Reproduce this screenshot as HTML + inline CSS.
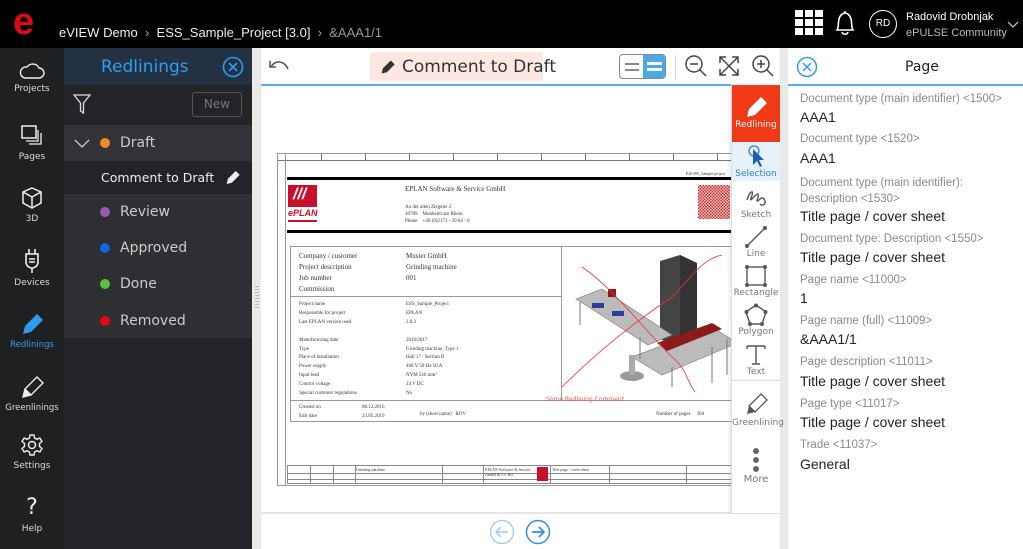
<!DOCTYPE html>
<html><head><meta charset="utf-8">
<style>
*{box-sizing:border-box;margin:0;padding:0}
body{width:1023px;height:549px;overflow:hidden;position:relative;font-family:"Liberation Sans","DejaVu Sans",sans-serif;background:#e9e9e9}
.a{position:absolute}
.top{left:0;top:0;width:1023px;height:48px;background:#000;color:#fff}
.rail{left:0;top:48px;width:64px;height:501px;background:#1f2022}
.ri{position:absolute;left:0;width:64px;text-align:center;color:#ddd;font-size:9px;font-family:"DejaVu Sans",sans-serif}
.ri svg{display:block;margin:0 auto 4px}
.panel{left:64px;top:48px;width:188px;height:501px;background:#232427}
.st{position:absolute;left:0;width:188px;height:37px;color:#ccc;font-size:14px;font-family:"DejaVu Sans",sans-serif;line-height:37px}
.dot{display:inline-block;width:10px;height:10px;border-radius:50%;vertical-align:-1px;margin:0 10px 0 36px}
.lbl{position:absolute;left:800px;font-size:11.5px;color:#8a8a8a;font-family:"Liberation Sans",sans-serif;white-space:nowrap}
.val{position:absolute;left:800px;font-size:14px;color:#222;font-family:"Liberation Sans",sans-serif;white-space:nowrap}
.tl{position:absolute;left:732px;width:48px;text-align:center;font-size:9px;color:#777;font-family:"DejaVu Sans",sans-serif}
.tl svg{display:block;margin:0 auto}
.d{position:absolute;font-family:"Liberation Serif",serif;color:#333;white-space:nowrap}
</style></head><body>
<div class="a top">
  <div class="a" style="left:13px;top:2px;font-size:38px;line-height:40px;font-weight:bold;color:#e30613;font-family:'Liberation Sans',sans-serif">e</div>
  <div class="a" style="left:59px;top:25px;font-size:13px;color:#eee">eVIEW Demo &nbsp;<span style="color:#aaa">›</span>&nbsp; ESS_Sample_Project [3.0] &nbsp;<span style="color:#aaa">›</span>&nbsp; <span style="color:#999">&amp;AAA1/1</span></div>
  <svg class="a" style="left:795px;top:10px" width="28" height="26" viewBox="0 0 28 26"><g fill="#fff"><rect x="0" y="0" width="8" height="7"/><rect x="10" y="0" width="8" height="7"/><rect x="20" y="0" width="8" height="7"/><rect x="0" y="9" width="8" height="7"/><rect x="10" y="9" width="8" height="7"/><rect x="20" y="9" width="8" height="7"/><rect x="0" y="18" width="8" height="7"/><rect x="10" y="18" width="8" height="7"/><rect x="20" y="18" width="8" height="7"/></g></svg>
  <svg class="a" style="left:833px;top:10px" width="24" height="26" viewBox="0 0 24 26"><path d="M4 20 C6 17 5 12 6 9 C7 5 10 3 12 3 C14 3 17 5 18 9 C19 12 18 17 20 20 Z M9 22 C10 25 14 25 15 22" fill="none" stroke="#fff" stroke-width="1.6"/><line x1="12" y1="1" x2="12" y2="3" stroke="#fff" stroke-width="1.6"/></svg>
  <div class="a" style="left:869px;top:10px;width:28px;height:28px;border:1.5px solid #fff;border-radius:50%;font-size:10px;text-align:center;line-height:25px">RD</div>
  <div class="a" style="left:906px;top:11px;font-size:11px">Radovid Drobnjak</div>
  <div class="a" style="left:906px;top:27px;font-size:11px;color:#bbb">ePULSE Community</div>
  <svg class="a" style="left:1007px;top:21px" width="12" height="8"><path d="M1 1 L6 6 L11 1" fill="none" stroke="#ccc" stroke-width="1.2"/></svg>
</div>
<div class="a rail">
  <div class="ri" style="top:14px"><svg width="26" height="18" viewBox="0 0 26 18"><path d="M6 16 H20 A5 5 0 0 0 20 6 A7 7 0 0 0 8 5 A5.5 5.5 0 0 0 6 16 Z" fill="none" stroke="#eee" stroke-width="1.4"/></svg>Projects</div>
  <div class="ri" style="top:76px"><svg width="24" height="24" viewBox="0 0 24 24"><rect x="2" y="2" width="14" height="12" fill="none" stroke="#eee" stroke-width="1.5"/><path d="M18 6 V17 H6 M21 9 V20 H9" fill="none" stroke="#eee" stroke-width="1.3"/></svg>Pages</div>
  <div class="ri" style="top:138px"><svg width="24" height="24" viewBox="0 0 24 24"><path d="M12 2 L21 6 V17 L12 22 L3 17 V6 Z M3 6 L12 11 L21 6 M12 11 V22" fill="none" stroke="#eee" stroke-width="1.5"/></svg>3D</div>
  <div class="ri" style="top:200px"><svg width="24" height="26" viewBox="0 0 24 26"><path d="M9 1 V6 M15 1 V6 M6 6 H18 V14 A6 6 0 0 1 6 14 Z M12 20 V25 M9 11 H15 M9 14 H15" fill="none" stroke="#eee" stroke-width="1.6"/></svg>Devices</div>
  <div class="ri" style="top:264px;color:#2e9cf0;font-size:8.5px"><svg width="26" height="24" viewBox="0 0 26 24"><path d="M18 2 L24 8 L12 20 L6 14 Z" fill="#2e9cf0"/><path d="M6 14 L12 20 L4 22 Z" fill="#2e9cf0"/></svg>Redlinings</div>
  <div class="ri" style="top:327px;font-size:8.5px"><svg width="26" height="24" viewBox="0 0 26 24"><path d="M18 2 L24 8 L12 20 L6 14 Z M6 14 L4 22 L12 20" fill="none" stroke="#eee" stroke-width="1.4"/><path d="M6 14 L12 20 L4 22 Z" fill="#eee"/></svg>Greenlinings</div>
  <div class="ri" style="top:385px"><svg width="24" height="24" viewBox="0 0 24 24"><circle cx="12" cy="12" r="3.5" fill="none" stroke="#eee" stroke-width="1.5"/><path d="M10 2 H14 L14.6 5 L17 6.3 L19.8 5 L22 8.5 L19.5 10.5 V13.5 L22 15.5 L19.8 19 L17 17.7 L14.6 19 L14 22 H10 L9.4 19 L7 17.7 L4.2 19 L2 15.5 L4.5 13.5 V10.5 L2 8.5 L4.2 5 L7 6.3 L9.4 5 Z" fill="none" stroke="#eee" stroke-width="1.4"/></svg>Settings</div>
  <div class="ri" style="top:448px"><div style="font-size:22px;color:#eee;line-height:24px;margin-bottom:4px">?</div>Help</div>
</div>
<div class="a panel">
  <div class="a" style="left:0;top:0;width:188px;height:37px;background:#233142"></div>
  <div class="a" style="left:37px;top:9px;font-size:17px;color:#2e9cf0;font-family:'DejaVu Sans',sans-serif">Redlinings</div>
  <svg class="a" style="left:158px;top:8px" width="22" height="22" viewBox="0 0 22 22"><circle cx="11" cy="11" r="9.5" fill="none" stroke="#2e9cf0" stroke-width="1.6"/><path d="M7 7 L15 15 M15 7 L7 15" stroke="#2e9cf0" stroke-width="1.6"/></svg>
  <svg class="a" style="left:9px;top:46px" width="18" height="20" viewBox="0 0 18 20"><path d="M1 1 H17 L10.5 9 V19 L7.5 17 V9 Z" fill="none" stroke="#ddd" stroke-width="1.3"/></svg>
  <div class="a" style="left:128px;top:44px;width:50px;height:25px;border:1px solid #555;border-radius:3px;color:#777;font-size:12px;text-align:center;line-height:23px;font-family:'DejaVu Sans',sans-serif">New</div>
  <div class="st" style="top:77px;background:#323337"><svg style="position:absolute;left:10px;top:14px" width="16" height="10"><path d="M1 1 L8 8 L15 1" fill="none" stroke="#ccc" stroke-width="1.3"/></svg><span class="dot" style="background:#f08a24"></span>Draft</div>
  <div class="st" style="top:113px;height:33px;line-height:33px;background:#232427;color:#eee;font-size:12.5px;padding-left:37px">Comment to Draft<svg style="position:absolute;left:160px;top:8px" width="17" height="17" viewBox="0 0 26 24"><path d="M18 2 L24 8 L12 20 L6 14 Z M6 14 L12 20 L4 22 Z" fill="#eee"/></svg></div>
  <div class="a" style="left:0;top:146px;width:188px;height:144px;background:#2e2f32"></div>
  <div class="st" style="top:146px"><span class="dot" style="background:#9b59b6"></span>Review</div>
  <div class="st" style="top:182px"><span class="dot" style="background:#1565e0"></span>Approved</div>
  <div class="st" style="top:218px"><span class="dot" style="background:#5cbf45"></span>Done</div>
  <div class="st" style="top:255px"><span class="dot" style="background:#e30613"></span>Removed</div>
</div>
<div class="a" style="left:261px;top:48px;width:519px;height:501px;background:#fff"></div>
<div class="a" style="left:261px;top:84px;width:470px;height:1.5px;background:#5aaee8"></div>
<svg class="a" style="left:267px;top:57px" width="24" height="18" viewBox="0 0 24 18"><path d="M4 10 C8 3 17 3 21 12 M3 4 V10 H9" fill="none" stroke="#555" stroke-width="1.6"/></svg>
<div class="a" style="left:370px;top:52px;width:173px;height:29px;background:#fde7e2;border-radius:3px"></div>
<svg class="a" style="left:379px;top:59px" width="17" height="16" viewBox="0 0 26 24"><path d="M18 2 L24 8 L12 20 L6 14 Z M6 14 L12 20 L4 22 Z" fill="#333"/></svg>
<div class="a" style="left:402px;top:57px;font-size:17px;color:#333;font-family:'DejaVu Sans',sans-serif">Comment to Draft</div>
<div class="a" style="left:619px;top:54px;width:47px;height:25px;border:1px solid #888;border-radius:4px;overflow:hidden"><div class="a" style="left:23px;top:0;width:24px;height:25px;background:#4aa8e8"></div><div class="a" style="left:5px;top:8px;width:14px;height:1.5px;background:#888"></div><div class="a" style="left:5px;top:14px;width:14px;height:1.5px;background:#888"></div><div class="a" style="left:27px;top:7px;width:15px;height:3px;background:#fff"></div><div class="a" style="left:27px;top:13px;width:15px;height:3px;background:#fff"></div></div>
<div class="a" style="left:675px;top:55px;width:1px;height:25px;background:#ddd"></div>
<svg class="a" style="left:684px;top:54px" width="24" height="24" viewBox="0 0 24 24"><circle cx="10" cy="10" r="8" fill="none" stroke="#444" stroke-width="1.5"/><path d="M6 10 H14 M16 16 L22 22" stroke="#444" stroke-width="1.5"/></svg>
<svg class="a" style="left:718px;top:55px" width="22" height="22" viewBox="0 0 22 22"><path d="M2 2 L20 20 M20 2 L2 20 M2 8 V2 H8 M14 2 H20 V8 M20 14 V20 H14 M8 20 H2 V14" fill="none" stroke="#444" stroke-width="1.5"/></svg>
<svg class="a" style="left:751px;top:54px" width="24" height="24" viewBox="0 0 24 24"><circle cx="10" cy="10" r="8" fill="none" stroke="#444" stroke-width="1.5"/><path d="M6 10 H14 M10 6 V14 M16 16 L22 22" stroke="#444" stroke-width="1.5"/></svg>
<div class="a" style="left:255px;top:286px;width:4px;height:24px;background:repeating-linear-gradient(#bbb 0 1px,transparent 1px 3px)"></div>
<div class="a" style="left:277px;top:153px;width:455px;height:333px;border:1px solid #999;background:#fff;overflow:hidden">
  <div class="a" style="left:0;top:0;width:455px;height:7px;border-bottom:1px solid #777;background:repeating-linear-gradient(90deg,transparent 0 43px,#777 43px 44px)"></div>
  <div class="a" style="left:0;top:0;width:8px;height:333px;border-right:1px solid #999"></div>
  <div class="d" style="left:408px;top:17px;font-size:4px">P26 000_Sample project</div>
  <div class="a" style="left:9px;top:23px;width:446px;height:3px;background:#000"></div>
  <div class="a" style="left:9px;top:76px;width:446px;height:3px;background:#000"></div>
  <div class="a" style="left:10px;top:31px;width:29px;height:22px;background:#c8102e"></div>
  <div class="d" style="left:15px;top:32px;font-size:16px;color:#fff;font-weight:bold;font-style:italic;font-family:'Liberation Sans',sans-serif">///</div>
  <div class="d" style="left:10px;top:54px;font-size:9px;color:#c8102e;font-weight:bold;font-style:italic;font-family:'Liberation Sans',sans-serif">ePLAN</div>
  <div class="a" style="left:10px;top:66px;width:29px;height:2px;background:#c8102e"></div>
  <div class="d" style="left:127px;top:31px;font-size:7px">EPLAN Software &amp; Service GmbH</div>
  <div class="d" style="left:127px;top:50px;font-size:5px;line-height:7px">An der alten Ziegelei 2<br>40789 &nbsp;&nbsp; Monheim am Rhein<br>Phone &nbsp;&nbsp; +49 (0)2173 - 39 64 - 0</div>
  <div class="a" style="left:420px;top:31px;width:32px;height:34px;background:repeating-conic-gradient(#c33 0 25%,#f6c6c6 0 50%) 0 0/3px 3px"></div>
  <div class="a" style="left:12px;top:92px;width:443px;height:176px;border:1px solid #999"></div>
  <div class="a" style="left:283px;top:92px;width:1px;height:155px;background:#999"></div>
  <div class="a" style="left:12px;top:142px;width:271px;height:1px;background:#999"></div>
  <div class="a" style="left:12px;top:246px;width:443px;height:1px;background:#999"></div>
  <div class="d" style="left:21px;top:97px;font-size:7px;line-height:11px">Company / customer<br>Project description<br>Job number<br>Commission</div>
  <div class="d" style="left:128px;top:97px;font-size:7px;line-height:11px">Muster GmbH<br>Grinding machine<br>001</div>
  <div class="d" style="left:21px;top:147px;font-size:5px;line-height:8.9px">Project name<br>Responsible for project<br>Last EPLAN version used<br><br>Manufacturing date<br>Type<br>Place of installation<br>Power supply<br>Input lead<br>Control voltage<br>Special customer regulations</div>
  <div class="d" style="left:128px;top:147px;font-size:5px;line-height:8.9px">ESS_Sample_Project<br>EPLAN<br>2.8.3<br><br>2016/2017<br>Grinding machine, Type 1<br>Hall 17 / Section B<br>400 V 50 Hz 50 A<br>NYM 5x6 mm²<br>24 V DC<br>No</div>
  <div class="d" style="left:21px;top:250px;font-size:5px;line-height:8.5px">Created on<br>Edit date</div>
  <div class="d" style="left:84px;top:250px;font-size:5px;line-height:8.5px">08.12.2016<br>23.05.2019</div>
  <div class="d" style="left:142px;top:258px;font-size:5px">by (short name) &nbsp; ROV</div>
  <div class="d" style="left:378px;top:258px;font-size:5px">Number of pages &nbsp;&nbsp;&nbsp; 304</div>
  <svg class="a" style="left:284px;top:93px" width="171" height="153" viewBox="0 0 171 153">
    <path d="M98 14 L118 8 L135 16 L135 92 L118 100 L98 92 Z" fill="#444"/><path d="M118 8 L135 16 L135 92 L118 100 Z" fill="#333"/>
    <path d="M14 52 L40 42 L110 88 L86 98 Z" fill="#bbb" stroke="#777" stroke-width=".6"/>
    <path d="M70 110 L150 80 L175 96 L100 128 Z" fill="#bbb" stroke="#777" stroke-width=".6"/>
    <path d="M95 96 L150 76 L160 82 L105 104 Z" fill="#8b1a1a"/>
    <rect x="30" y="56" width="12" height="5" fill="#2a3f9a"/><rect x="50" y="64" width="12" height="5" fill="#2a3f9a"/>
    <rect x="46" y="42" width="8" height="8" fill="#8b1a1a"/>
    <ellipse cx="70" cy="129" rx="12" ry="5" fill="#999"/><rect x="67" y="108" width="6" height="20" fill="#aaa"/>
    <g stroke="#777" stroke-width="1"><path d="M18 55 V78 M78 90 V112 M150 100 V136 M165 92 V128 M110 120 V140"/></g>
    <path d="M20 20 C50 40 80 80 110 110 C125 122 125 135 133 145" fill="none" stroke="#e33" stroke-width=".8"/>
    <path d="M0 140 C40 100 80 70 110 50 C130 30 140 12 160 8" fill="none" stroke="#e33" stroke-width=".8"/>
  </svg>
  <div class="d" style="left:268px;top:242px;font-size:6px;color:#e55;font-family:'DejaVu Sans',sans-serif">Some Redlining Comment</div>
  <div class="a" style="left:9px;top:311px;width:446px;height:19px;border:1px solid #888;background:linear-gradient(#888,#888) 0 7px/100% 1px no-repeat,linear-gradient(#888,#888) 0 13px/100% 1px no-repeat"></div>
  <div class="a" style="left:32px;top:311px;width:1px;height:19px;background:#888"></div><div class="a" style="left:55px;top:311px;width:1px;height:19px;background:#888"></div><div class="a" style="left:77px;top:311px;width:1px;height:19px;background:#888"></div><div class="a" style="left:164px;top:311px;width:1px;height:19px;background:#888"></div><div class="a" style="left:205px;top:311px;width:1px;height:19px;background:#888"></div><div class="a" style="left:272px;top:311px;width:1px;height:19px;background:#888"></div><div class="a" style="left:331px;top:311px;width:1px;height:19px;background:#888"></div><div class="a" style="left:408px;top:311px;width:1px;height:19px;background:#888"></div>
  <div class="d" style="left:78px;top:313px;font-size:4px">Grinding machine</div>
  <div class="d" style="left:207px;top:313px;font-size:4px">EPLAN Software &amp; Service<br>GmbH &amp; Co. KG</div>
  <div class="a" style="left:259px;top:313px;width:11px;height:14px;background:#c8102e"></div>
  <div class="d" style="left:274px;top:313px;font-size:4px">Title page / cover sheet</div>
</div>
<div class="a" style="left:261px;top:512px;width:519px;height:2px;background:#e6e6e6"></div>
<svg class="a" style="left:489px;top:519px" width="26" height="26" viewBox="0 0 26 26"><circle cx="13" cy="13" r="11.5" fill="none" stroke="#9ccbf0" stroke-width="1.3"/><path d="M19 13 H7 M12 8 L7 13 L12 18" fill="none" stroke="#9ccbf0" stroke-width="1.5"/></svg>
<svg class="a" style="left:525px;top:519px" width="26" height="26" viewBox="0 0 26 26"><circle cx="13" cy="13" r="11.5" fill="none" stroke="#2e8fe0" stroke-width="1.5"/><path d="M7 13 H19 M14 8 L19 13 L14 18" fill="none" stroke="#2e8fe0" stroke-width="1.7"/></svg>
<div class="a" style="left:731px;top:85px;width:49px;height:428px;background:#fff;border-left:1px solid #ddd;box-shadow:-2px 0 3px rgba(0,0,0,.08)"></div>
<div class="a" style="left:731px;top:380px;width:49px;height:1px;background:#ddd"></div>
<div class="a" style="left:732px;top:85px;width:48px;height:57px;background:#f03a17"></div>
<div class="tl" style="top:94px;color:#fff"><svg width="26" height="26" viewBox="0 0 26 24"><path d="M18 2 L24 8 L12 20 L6 14 Z M6 14 L12 20 L4 22 Z" fill="#fff"/></svg>Redlining</div>
<div class="a" style="left:732px;top:142px;width:48px;height:39px;background:#e6f1fb"></div>
<div class="tl" style="top:143px;color:#2e7fd0"><svg width="24" height="26" viewBox="0 0 24 26"><circle cx="10" cy="8" r="5" fill="none" stroke="#2e7fd0" stroke-width="1.3"/><path d="M9 6 L9 22 L13 18 L16 24 L18 23 L15 17 L20 17 Z" fill="#1d5fb0"/></svg>Selection</div>
<div class="tl" style="top:186px"><svg width="24" height="24" viewBox="0 0 24 24"><path d="M3 14 C6 4 11 3 7 12 C5 18 12 7 14 8 C16 10 10 18 15 14 C17 12 19 10 21 15 C22 19 18 20 16 18" fill="none" stroke="#555" stroke-width="1.4"/></svg>Sketch</div>
<div class="tl" style="top:225px"><svg width="24" height="24" viewBox="0 0 24 24"><path d="M3 21 L21 3" stroke="#555" stroke-width="1.4"/><circle cx="3" cy="21" r="2" fill="#555"/><circle cx="21" cy="3" r="2" fill="#555"/></svg>Line</div>
<div class="tl" style="top:264px"><svg width="24" height="24" viewBox="0 0 24 24"><rect x="3" y="3" width="18" height="18" fill="none" stroke="#555" stroke-width="1.4"/><g fill="#555"><circle cx="3" cy="3" r="2"/><circle cx="21" cy="3" r="2"/><circle cx="3" cy="21" r="2"/><circle cx="21" cy="21" r="2"/></g></svg>Rectangle</div>
<div class="tl" style="top:303px"><svg width="24" height="24" viewBox="0 0 24 24"><path d="M12 2 L22 9 L18 21 L6 21 L2 9 Z" fill="none" stroke="#555" stroke-width="1.4"/><g fill="#555"><circle cx="12" cy="2.5" r="2"/><circle cx="21.5" cy="9" r="2"/><circle cx="18" cy="21" r="2"/><circle cx="6" cy="21" r="2"/><circle cx="2.5" cy="9" r="2"/></g></svg>Polygon</div>
<div class="tl" style="top:343px"><svg width="24" height="24" viewBox="0 0 24 24"><path d="M3 3 H21 M12 3 V21 M8 21 H16 M3 3 V6 M21 3 V6" fill="none" stroke="#555" stroke-width="1.4"/></svg>Text</div>
<div class="tl" style="top:390px"><svg width="26" height="28" viewBox="0 0 26 24"><path d="M18 2 L24 8 L12 20 L6 14 Z" fill="none" stroke="#555" stroke-width="1.3"/><path d="M6 14 L12 20 L4 22 Z" fill="#555"/></svg>Greenlining</div>
<div class="tl" style="top:448px;font-size:10px"><div style="width:6px;height:6px;background:#666;border-radius:50%;margin:0 auto 3px"></div><div style="width:6px;height:6px;background:#666;border-radius:50%;margin:0 auto 3px"></div><div style="width:6px;height:6px;background:#666;border-radius:50%;margin:0 auto 2px"></div>More</div>
<div class="a" style="left:788px;top:48px;width:235px;height:501px;background:#fff"></div>
<div class="a" style="left:788px;top:84px;width:235px;height:1.5px;background:#5aaee8"></div>
<svg class="a" style="left:796px;top:56px" width="22" height="22" viewBox="0 0 22 22"><circle cx="11" cy="11" r="9.5" fill="none" stroke="#2e9cf0" stroke-width="1.5"/><path d="M7 7 L15 15 M15 7 L7 15" stroke="#2e9cf0" stroke-width="1.5"/></svg>
<div class="a" style="left:905px;top:59px;font-size:14px;color:#222;font-family:'DejaVu Sans',sans-serif">Page</div>
<div class="lbl" style="top:93px">Document type (main identifier) &lt;1500&gt;</div><div class="val" style="top:109px">AAA1</div>
<div class="lbl" style="top:133px">Document type &lt;1520&gt;</div><div class="val" style="top:150px">AAA1</div>
<div class="lbl" style="top:175px;line-height:16px">Document type (main identifier):<br>Description &lt;1530&gt;</div><div class="val" style="top:208px">Title page / cover sheet</div>
<div class="lbl" style="top:233px">Document type: Description &lt;1550&gt;</div><div class="val" style="top:249px">Title page / cover sheet</div>
<div class="lbl" style="top:274px">Page name &lt;11000&gt;</div><div class="val" style="top:290px">1</div>
<div class="lbl" style="top:315px">Page name (full) &lt;11009&gt;</div><div class="val" style="top:331px">&amp;AAA1/1</div>
<div class="lbl" style="top:356px">Page description &lt;11011&gt;</div><div class="val" style="top:373px">Title page / cover sheet</div>
<div class="lbl" style="top:398px">Page type &lt;11017&gt;</div><div class="val" style="top:414px">Title page / cover sheet</div>
<div class="lbl" style="top:439px">Trade &lt;11037&gt;</div><div class="val" style="top:456px">General</div>
</body></html>
